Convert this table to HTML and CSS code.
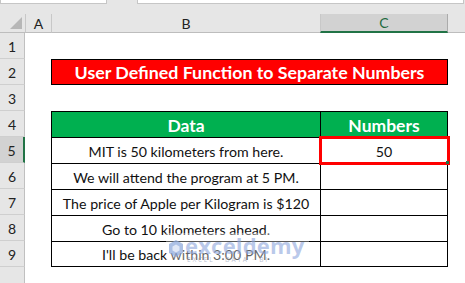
FILE: index.html
```html
<!DOCTYPE html>
<html>
<head>
<meta charset="utf-8">
<link rel="stylesheet" href="styles.css">
</head>
<body>
<div class="app">
  <div class="topbar">
    <div class="namebox"></div>
    <div class="gap"></div>
    <div class="formula"></div>
  </div>
  <div class="sheet">
    <div class="hd corner"><span class="tri"></span></div>
    <div class="hd col">A</div>
    <div class="hd col">B</div>
    <div class="hd col sel">C</div>
    <div class="hd col end"></div>

    <div class="rh">1</div><div></div><div></div><div></div><div></div>
    <div class="rh">2</div><div></div><div class="title">User Defined Function to Separate Numbers</div><div></div>
    <div class="rh">3</div><div></div><div></div><div></div><div></div>
    <div class="rh">4</div><div></div><div class="c th">Data</div><div class="c th cc">Numbers</div><div></div>
    <div class="rh rsel">5</div><div></div><div class="c">MIT is 50 kilometers from here.</div><div class="c cc active">50<span class="handle"></span></div><div></div>
    <div class="rh">6</div><div></div><div class="c">We will attend the program at 5 PM.</div><div class="c cc"></div><div></div>
    <div class="rh">7</div><div></div><div class="c">The price of Apple per Kilogram is $120</div><div class="c cc"></div><div></div>
    <div class="rh">8</div><div></div><div class="c">Go to 10 kilometers ahead.</div><div class="c cc"></div><div></div>
    <div class="rh">9</div><div></div><div class="c last">I'll be back within 3:00 PM.</div><div class="c cc last"></div><div></div>
    <div class="rh"></div><div></div><div></div><div></div><div></div>
  </div>
  <div class="watermark">
    <svg class="wm-logo" width="16" height="19" viewBox="0 0 16 19">
      <path d="M8 1 L15 5 L15 14 L8 18 L1 14 L1 5 Z" fill="#8aa6db"/>
      <path d="M8 5.5 L11.5 7.5 L11.5 11.5 L8 13.5 L4.5 11.5 L4.5 7.5 Z" fill="#d3def3"/>
    </svg>
    <div class="wm-text">
      <div class="wm-name">exceldemy</div>
      <div class="wm-sub">EXCEL · DATA · BI</div>
    </div>
  </div>
</div>
</body>
</html>
```

FILE: styles.css
```css
* { box-sizing: border-box; }
html, body { margin: 0; padding: 0; background: #fff; }
body { font-family: Lato, "Open Sans", sans-serif; font-size: 14.2px; color: #000; overflow: hidden; }
.app { position: relative; width: 465px; height: 283px; overflow: hidden; }

.topbar { height: 14px; background: #e6e6e6; display: flex; align-items: flex-start; }
.namebox { width: 107px; height: 4px; background: #fff; border: 1px solid #c6c6c6; border-top: none; }
.gap { width: 30px; }
.formula { flex: 1; height: 4px; background: #fff; border: 1px solid #c6c6c6; border-top: none; margin-right: 1px; }

.sheet {
  display: grid;
  grid-template-columns: 25px 26px 269px 128px 17px;
  grid-template-rows: 19px repeat(10, 26px);
}
.hd { background: #e6e6e6; border-bottom: 1px solid #bdbdbd; font-size: 14px; color: #222; display: flex; align-items: center; justify-content: center; }
.col { border-left: 1px solid #c8c8c8; }
.corner { position: relative; }
.tri { position: absolute; right: 3px; bottom: 3px; width: 0; height: 0; border-left: 12px solid transparent; border-bottom: 12px solid #b7b7b7; }
.hd.sel { background: #d2d2d2; border-bottom: 2px solid #217346; color: #1e6b3f; border-right: 1px solid #ababab; }
.hd.end { border-left: none; }

.rh { background: #e6e6e6; border-right: 1px solid #c0c0c0; border-bottom: 1px solid #cfcfcf; display: flex; align-items: center; justify-content: center; font-size: 14px; color: #222; padding-top: 2px; }
.rh.rsel { background: #d2d2d2; border-right: 2px solid #217346; }

.title {
  grid-column: 3 / 5;
  background: #ff0000; color: #fff; font-weight: 700; font-size: 17.8px;
  border: 1px solid #000;
  display: flex; align-items: center; justify-content: center;
}
.c { border-left: 1px solid #000; border-top: 1px solid #000; display: flex; align-items: center; justify-content: center; white-space: nowrap; color: #111; padding-top: 1px; }
.cc { border-right: 1px solid #000; }
.last { border-bottom: 1px solid #000; }
.th { background: #00b050; color: #fff; font-weight: 700; font-size: 17.5px; }
.active { position: relative; }
.active::after { content: ""; position: absolute; left: -2px; top: -2px; right: -3px; bottom: -2px; border: 3px solid #ff0000; }
.handle { position: absolute; right: -2px; bottom: -1px; width: 3px; height: 3px; background: #217346; z-index: 2; }

.watermark { position: absolute; left: 166px; top: 233px; display: flex; align-items: flex-start; gap: 1px; padding: 2px 4px 1px 2px; background: rgba(255,255,255,0.35); }
.wm-logo { margin-top: 4px; opacity: 0.7; }
.wm-name { font-family: "Open Sans", sans-serif; font-weight: 700; font-size: 22px; color: rgba(140,165,220,0.6); line-height: 21px; letter-spacing: 0.2px; }
.wm-sub { font-family: "Open Sans", sans-serif; font-size: 6.5px; color: rgba(150,160,185,0.7); letter-spacing: 1.8px; margin-top: 0; padding-left: 2px; line-height: 8px; }
```
